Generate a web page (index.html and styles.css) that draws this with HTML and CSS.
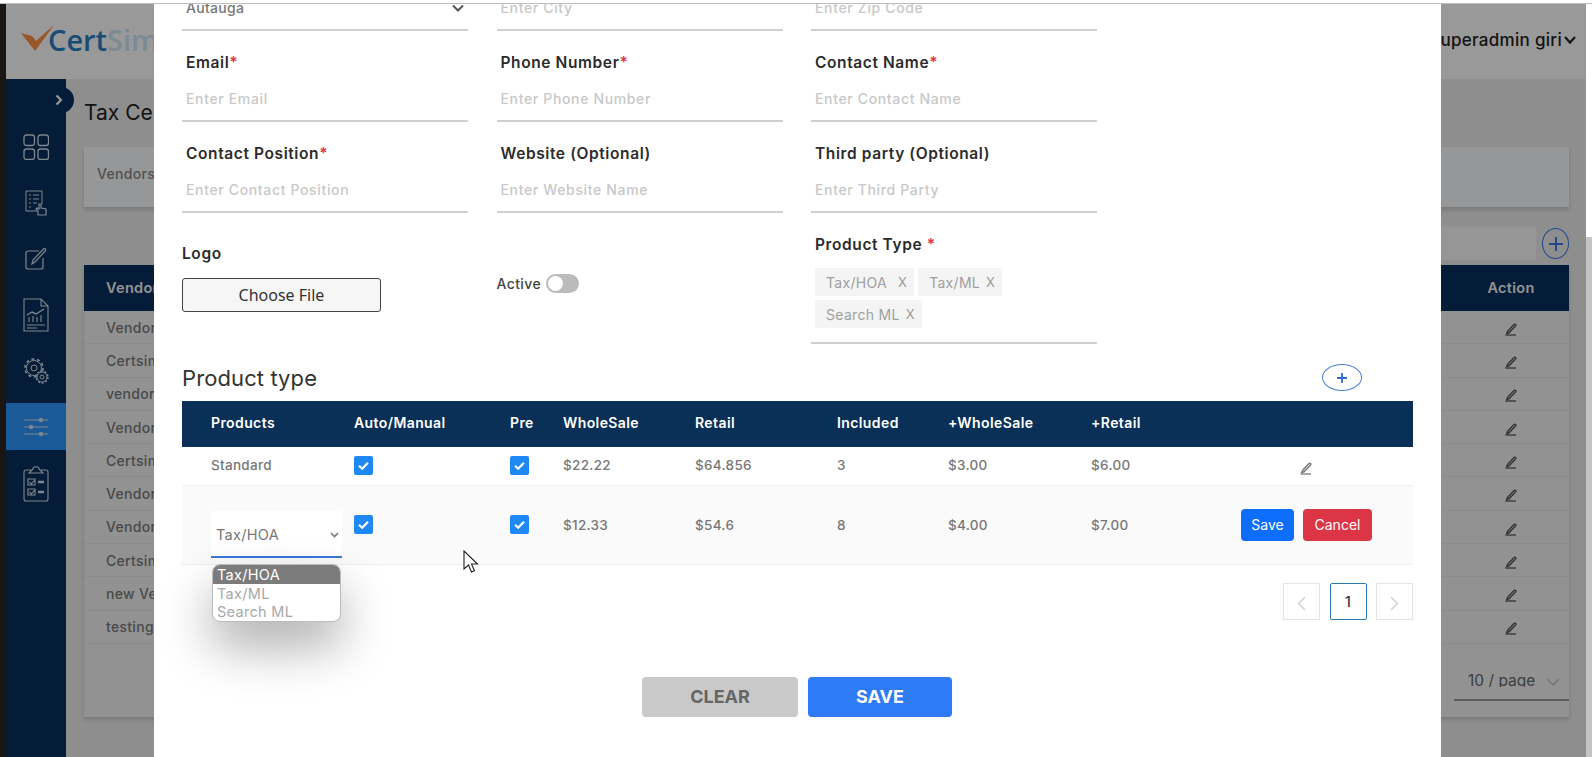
FILE: index.html
```html
<!DOCTYPE html>
<html lang="en">
<head>
  <meta charset="utf-8">
  <title>Tax Certificate Vendors</title>
  <link rel="stylesheet" href="styles.css">
</head>
<body>
  <svg class="defs" width="0" height="0">
    <symbol id="pen" viewBox="0 0 14 14">
      <path d="M3.5 9.6 10 2.6c.5-.5 1.200-.5 1.600-.1s.4 1.100-.1 1.600L5 10.800l-2.200.6z" fill="none" stroke="currentColor" stroke-width="1.400"/>
      <path d="M1.500 13h10.500" stroke="currentColor" stroke-width="1.300"/>
    </symbol>
    <symbol id="tick" viewBox="0 0 19 19">
      <path d="M5 9.800l3.200 3 5.800-6" fill="none" stroke="#fff" stroke-width="2.200"/>
    </symbol>
  </svg>

  <div class="topstrip"></div>
  <div class="window">
    <div class="app">
      <header class="header">
        <div class="logo">
          <svg class="logo-check" width="34" height="26" viewBox="0 0 34 26"><path d="M0 8l11 3 4 5L33 0 14 26z" fill="#ff8f45"/></svg>
          <span class="logo-cert">Cert</span><span class="logo-sim">Sim</span>
        </div>
        <div class="user">
          <span>superadmin giri</span>
          <svg width="12" height="10" viewBox="0 0 12 10"><path d="M1 2l5 5.500L11 2" fill="none" stroke="#222" stroke-width="2.200"/></svg>
        </div>
      </header>

      <div class="content">
        <nav class="sidebar">
          <span class="side-toggle">
            <svg width="8" height="12" viewBox="0 0 8 12"><path d="M1.500 1.500 6 6l-4.500 4.500" fill="none" stroke="#fff" stroke-width="2.200"/></svg>
          </span>
          <a class="side-item">
            <svg width="26" height="26" viewBox="0 0 26 26"><g fill="none" stroke="currentColor" stroke-width="1.300"><rect x="1" y="1" width="10.500" height="10.500" rx="2.500"/><rect x="15" y="1" width="10.500" height="10.500" rx="2.500"/><rect x="1" y="15" width="10.500" height="10.500" rx="2.500"/><rect x="15" y="15" width="10.500" height="10.500" rx="2.500"/></g></svg>
          </a>
          <a class="side-item">
            <svg width="22" height="26" viewBox="0 0 22 26"><g fill="none" stroke="currentColor" stroke-width="1"><path d="M12 21H1V1h16v13"/><path d="M4 5h2M8 5h6M4 9h2M8 9h6M4 13h2M8 13h4M4 17h2"/><path d="M13 25v-4l-2-2 1-1 2 1v-5h2v4l5 1v6z" stroke-width="1.200"/></g></svg>
          </a>
          <a class="side-item">
            <svg width="22" height="23" viewBox="0 0 22 23"><g fill="none" stroke="currentColor" stroke-width="1.200"><path d="M14 4H3a2 2 0 0 0-2 2v14a2 2 0 0 0 2 2h13a2 2 0 0 0 2-2V11"/><path d="M7 17l1-4L18.500 2c.8-.8 1.600-.6 2 0s.4 1.300-.3 2L10 15z"/></g></svg>
          </a>
          <a class="side-item">
            <svg width="26" height="34" viewBox="0 0 26 34"><g fill="none" stroke="currentColor" stroke-width="1.100"><path d="M1 1h17l7 7v25H1z"/><path d="M18 1v7h7"/><path d="M4 17l5-3 4 2 8-5" stroke-width="1.400"/><path d="M6 24v-5M10 24v-6M14 24v-5M18 24v-7M4 27h18M4 30h10"/></g></svg>
          </a>
          <a class="side-item">
            <svg width="26" height="28" viewBox="0 0 26 28"><g fill="none" stroke="currentColor"><circle cx="11" cy="11" r="7.500" stroke-width="1"/><circle cx="11" cy="11" r="9" stroke-width="1.600" stroke-dasharray="3 2.650"/><circle cx="11" cy="11" r="3" stroke-width="1"/><circle cx="19" cy="20" r="5" fill="#082f5d" stroke-width="1"/><circle cx="19" cy="20" r="6" stroke-width="1.300" stroke-dasharray="2 1.770"/><circle cx="19" cy="20" r="2" stroke-width="1"/></g></svg>
          </a>
          <a class="side-item active">
            <svg width="26" height="20" viewBox="0 0 26 20"><g stroke="currentColor" stroke-width="1"><path d="M1 3h24M1 10h24M1 17h24"/></g><g fill="currentColor"><circle cx="18" cy="3" r="2.200"/><circle cx="8" cy="10" r="2.200"/><circle cx="18" cy="17" r="2.200"/></g></svg>
          </a>
          <a class="side-item">
            <svg width="26" height="38" viewBox="0 0 26 38"><g fill="none" stroke="currentColor" stroke-width="1.100"><path d="M8 6H3a2 2 0 0 0-2 2v27a2 2 0 0 0 2 2h20a2 2 0 0 0 2-2V8a2 2 0 0 0-2-2h-5"/><path d="M6 9l4-4c0-3 6-3 6 0l4 4z"/><path d="M5 15h7v6H5zM5 25h7v6H5zM6.500 18l2 2 4-5M6.500 28l2 2 4-5"/><path d="M15 18h6M15 28h6" stroke-width="2.400"/></g></svg>
          </a>
        </nav>

        <main class="main">
          <h1 class="page-title">Tax Cert</h1>
          <div class="crumb-card">Vendors</div>
          <div class="toolbar">
            <div class="search"></div>
            <span class="round-add">
              <svg width="16" height="16" viewBox="0 0 16 16"><path d="M8 1v14M1 8h14" stroke="#3a78e8" stroke-width="2"/></svg>
            </span>
          </div>
          <section class="vendor-card">
            <div class="vendor-row vendor-head"><span>Vendor</span><span class="vendor-action">Action</span></div>
            <div class="vendor-row"><span>Vendor</span><span class="vendor-action"><svg class="pen"><use href="#pen"/></svg></span></div>
            <div class="vendor-row"><span>Certsim</span><span class="vendor-action"><svg class="pen"><use href="#pen"/></svg></span></div>
            <div class="vendor-row"><span>vendor</span><span class="vendor-action"><svg class="pen"><use href="#pen"/></svg></span></div>
            <div class="vendor-row"><span>Vendor</span><span class="vendor-action"><svg class="pen"><use href="#pen"/></svg></span></div>
            <div class="vendor-row"><span>Certsim</span><span class="vendor-action"><svg class="pen"><use href="#pen"/></svg></span></div>
            <div class="vendor-row"><span>Vendor</span><span class="vendor-action"><svg class="pen"><use href="#pen"/></svg></span></div>
            <div class="vendor-row"><span>Vendor</span><span class="vendor-action"><svg class="pen"><use href="#pen"/></svg></span></div>
            <div class="vendor-row"><span>Certsim</span><span class="vendor-action"><svg class="pen"><use href="#pen"/></svg></span></div>
            <div class="vendor-row"><span>new Vendor</span><span class="vendor-action"><svg class="pen"><use href="#pen"/></svg></span></div>
            <div class="vendor-row"><span>testing</span><span class="vendor-action"><svg class="pen"><use href="#pen"/></svg></span></div>
            <div class="vendor-foot">
              <div class="page-size">
                <span class="page-size-text">10 / page</span>
                <svg width="14" height="8" viewBox="0 0 14 8"><path d="M1 1l6 6 6-6" fill="none" stroke="#bbb" stroke-width="1.200"/></svg>
              </div>
            </div>
          </section>
        </main>
      </div>

      <div class="backdrop"></div>

      <div class="modal">
        <div class="modal-body">
          <div class="form-grid">
            <div class="input input-filled">Autauga
              <svg width="12" height="8" viewBox="0 0 12 8"><path d="M1 1.500l5 5 5-5" fill="none" stroke="#555" stroke-width="2"/></svg>
            </div>
            <div class="input">Enter City</div>
            <div class="input">Enter Zip Code</div>

            <div class="field"><label>Email<b>*</b></label><div class="input">Enter Email</div></div>
            <div class="field"><label>Phone Number<b>*</b></label><div class="input">Enter Phone Number</div></div>
            <div class="field"><label>Contact Name<b>*</b></label><div class="input">Enter Contact Name</div></div>

            <div class="field"><label>Contact Position<b>*</b></label><div class="input">Enter Contact Position</div></div>
            <div class="field"><label>Website (Optional)</label><div class="input">Enter Website Name</div></div>
            <div class="field"><label>Third party (Optional)</label><div class="input">Enter Third Party</div></div>

            <div class="logo-field">
              <label>Logo</label>
              <button class="file-btn">Choose File</button>
            </div>
            <div class="active-field">
              <span>Active</span>
              <span class="switch"><i></i></span>
            </div>
            <div class="type-field">
              <label>Product Type <b>*</b></label>
              <div class="tags">
                <span class="tag">Tax/HOA<em>X</em></span>
                <span class="tag">Tax/ML<em>X</em></span>
                <span class="tag">Search ML<em>X</em></span>
              </div>
            </div>
          </div>

          <div class="type-head">
            <h2>Product type</h2>
            <span class="oval-add">
              <svg width="12" height="12" viewBox="0 0 12 12"><path d="M6 1v10M1 6h10" stroke="#2f6fd8" stroke-width="1.800"/></svg>
            </span>
          </div>

          <table class="type-table">
            <colgroup>
              <col class="c-products"><col class="c-auto"><col class="c-pre"><col class="c-whole"><col class="c-retail"><col class="c-incl"><col class="c-pwhole"><col class="c-pretail"><col>
            </colgroup>
            <thead>
              <tr><th>Products</th><th>Auto/Manual</th><th>Pre</th><th>WholeSale</th><th>Retail</th><th>Included</th><th>+WholeSale</th><th>+Retail</th><th></th></tr>
            </thead>
            <tbody>
              <tr class="row-plain">
                <td>Standard</td>
                <td><span class="check"><svg><use href="#tick"/></svg></span></td>
                <td><span class="check"><svg><use href="#tick"/></svg></span></td>
                <td>$22.22</td><td>$64.856</td><td>3</td><td>$3.00</td><td>$6.00</td>
                <td><svg class="pen pen-row"><use href="#pen"/></svg></td>
              </tr>
              <tr class="row-edit">
                <td>
                  <div class="pick">
                    <span>Tax/HOA</span>
                    <svg width="9" height="6" viewBox="0 0 9 6"><path d="M1 1l3.500 3.500L8 1" fill="none" stroke="#777" stroke-width="1.600"/></svg>
                    <ul class="pick-list">
                      <li class="selected">Tax/HOA</li>
                      <li>Tax/ML</li>
                      <li>Search ML</li>
                    </ul>
                  </div>
                </td>
                <td><span class="check"><svg><use href="#tick"/></svg></span></td>
                <td><span class="check"><svg><use href="#tick"/></svg></span></td>
                <td>$12.33</td><td>$54.6</td><td>8</td><td>$4.00</td><td>$7.00</td>
                <td><div class="row-btns"><button class="btn-save">Save</button><button class="btn-cancel">Cancel</button></div></td>
              </tr>
            </tbody>
          </table>

          <div class="pager">
            <span class="pager-item"><svg width="9" height="14" viewBox="0 0 9 14"><path d="M8 1 1.500 7.500 8 14" fill="none" stroke="#ccc" stroke-width="1.200"/></svg></span>
            <span class="pager-item current">1</span>
            <span class="pager-item"><svg width="9" height="14" viewBox="0 0 9 14"><path d="M1 1l6.500 6.500L1 14" fill="none" stroke="#ccc" stroke-width="1.200"/></svg></span>
          </div>

          <div class="modal-foot">
            <button class="btn-clear">CLEAR</button>
            <button class="btn-submit">SAVE</button>
          </div>
        </div>

        <svg class="cursor" width="16" height="24" viewBox="0 0 16 24"><path d="M1 1v18l4.500-4 3 7 3-1.300-3-6.700h6z" fill="#fff" stroke="#222" stroke-width="1.100"/></svg>
      </div>
    </div>
    <div class="scrollbar"><div class="scroll-thumb"></div></div>
  </div>
</body>
</html>
```

FILE: styles.css
```css
* {
  margin: 0;
  padding: 0;
  box-sizing: border-box;
  list-style: none;
}

html, body {
  height: 100%;
  overflow: hidden;
}

body {
  background: #fff;
  font-family: Inter, "Liberation Sans", sans-serif;
  color: #333;
}

.defs {
  display: block;
  height: 0;
}

.topstrip {
  height: 4px;
  border-bottom: 1px solid #bdbdbd;
}

.window {
  display: flex;
  height: 753px;
  background: #1a1614;
  padding-left: 6px;
}

.app {
  position: relative;
  flex: 1;
  display: flex;
  flex-direction: column;
  overflow: hidden;
  background: #ededed;
}

.scrollbar {
  width: 6px;
  background: #fff;
  padding-top: 233px;
}

.scroll-thumb {
  height: 100%;
  background: #c4c4c4;
}

/* page behind the dialog */
.header {
  height: 75px;
  flex: none;
  display: flex;
  justify-content: space-between;
  align-items: center;
  background: #fff;
  padding: 0 10px 4px 15px;
}

.logo {
  display: flex;
  align-items: center;
  font-family: "Open Sans", sans-serif;
  font-size: 29px;
  font-weight: 600;
}

.logo-check {
  margin: -4px -7px 0 0;
}

.logo-cert {
  color: #2a7fc4;
}

.logo-sim {
  color: #cfe6f5;
}

.user {
  display: flex;
  align-items: center;
  gap: 2px;
  font-size: 17px;
  font-weight: 500;
  color: #222;
  letter-spacing: .3px;
}

.content {
  flex: 1;
  display: flex;
  min-height: 0;
}

.sidebar {
  position: relative;
  width: 60px;
  flex: none;
  display: flex;
  flex-direction: column;
  gap: 9px;
  padding-top: 44px;
  background: #082f5d;
}

.side-toggle {
  position: absolute;
  top: 8px;
  right: -8px;
  width: 26px;
  height: 26px;
  border-radius: 50%;
  background: #082f5d;
  display: flex;
  align-items: center;
  padding-left: 7px;
}

.side-item {
  height: 47px;
  display: flex;
  align-items: center;
  justify-content: center;
  color: #d4e0ec;
}

.side-item.active {
  background: #2d96ff;
}

.main {
  flex: 1;
  min-width: 0;
  padding: 19px 17px 0 18px;
}

.page-title {
  font-size: 21px;
  font-weight: 400;
  line-height: 30px;
  color: #222;
  white-space: nowrap;
}

.crumb-card {
  height: 60px;
  margin-top: 19px;
  padding: 18px 13px;
  font-size: 14px;
  font-weight: 500;
  color: #888;
  letter-spacing: .3px;
  background: #fafcff;
  box-shadow: 0 3px 4px rgba(0, 0, 0, .15);
}

.toolbar {
  display: flex;
  justify-content: flex-end;
  align-items: center;
  gap: 5px;
  height: 35px;
  margin-top: 19px;
}

.search {
  width: 300px;
  height: 35px;
  background: #fafafa;
  border: 1px solid #f0f0f0;
}

.round-add {
  width: 27px;
  height: 31px;
  display: flex;
  align-items: center;
  justify-content: center;
  border: 1px solid #3a78e8;
  border-radius: 50%;
}

.vendor-card {
  margin-top: 4px;
  height: 452px;
  background: #f4f4f4;
  box-shadow: 0 3px 4px rgba(0, 0, 0, .15);
}

.vendor-row {
  display: flex;
  justify-content: space-between;
  align-items: center;
  height: 33.300px;
  padding-left: 22px;
  border-bottom: 1px solid #e8e8e8;
  font-size: 14px;
  font-weight: 500;
  color: #7a7a7a;
  letter-spacing: .3px;
}

.vendor-head {
  height: 46px;
  padding-bottom: 2px;
  background: #082f5d;
  color: #f4f4f4;
  font-size: 14.500px;
  font-weight: 600;
  border: 0;
}

.vendor-action {
  width: 116px;
  text-align: center;
}

.pen {
  display: inline-block;
  width: 14px;
  height: 14px;
  color: #555;
  vertical-align: middle;
}

.vendor-foot {
  display: flex;
  justify-content: flex-end;
  padding-top: 18px;
}

.page-size {
  width: 115px;
  height: 39px;
  display: flex;
  align-items: flex-start;
  gap: 11px;
  padding: 10px 0 0 14px;
  border-bottom: 2px solid #999;
}

.page-size-text {
  height: 15px;
  overflow: hidden;
  font-size: 15.500px;
  line-height: 18px;
  color: #666;
}

.page-size svg {
  margin-top: 6px;
}

.backdrop {
  position: absolute;
  inset: 0;
  background: rgba(0, 0, 0, .4);
}

/* dialog */
.modal {
  position: absolute;
  top: 0;
  bottom: 0;
  left: 148px;
  width: 1287px;
  background: #fff;
  overflow: hidden;
}

.modal-body {
  margin-top: -22px;
  padding: 0 28px;
}

.form-grid {
  display: grid;
  grid-template-columns: 286px 286px 286px;
  column-gap: 28.500px;
}

.field {
  height: 91px;
  padding-top: 22px;
}

label {
  display: block;
  height: 20px;
  padding-left: 4px;
  font-size: 15.500px;
  line-height: 20px;
  font-weight: 600;
  color: #2b2b2b;
  letter-spacing: .6px;
}

label b {
  color: #e0354b;
  font-weight: 600;
}

.input {
  height: 49px;
  padding: 16px 4px 0;
  border-bottom: 2px solid #cfcfcf;
  font-size: 14px;
  line-height: 20px;
  font-weight: 500;
  color: #c8c8c8;
  letter-spacing: .65px;
}

.input-filled {
  display: flex;
  justify-content: space-between;
  align-items: flex-start;
  color: #777;
  letter-spacing: .3px;
}

.input-filled svg {
  margin: 6px 0 0;
}

.logo-field {
  padding-top: 31px;
}

.logo-field label {
  padding-left: 0;
}

.file-btn {
  display: block;
  width: 199px;
  height: 34px;
  margin-top: 14px;
  border: 1px solid #444;
  border-radius: 3px;
  background: #f6f6f7;
  font-family: "Noto Sans", sans-serif;
  font-size: 16px;
  color: #333;
}

.active-field {
  display: flex;
  align-items: center;
  gap: 5px;
  height: 20px;
  margin-top: 60px;
  font-size: 14px;
  font-weight: 500;
  letter-spacing: .4px;
  color: #444;
}

.switch {
  width: 33px;
  height: 19px;
  padding: 2px;
  border-radius: 10px;
  background: #bbb;
}

.switch i {
  display: block;
  width: 15px;
  height: 15px;
  border-radius: 50%;
  background: #fff;
}

.type-field {
  height: 131px;
  padding-top: 22px;
  border-bottom: 2px solid #cfcfcf;
}

.tags {
  display: flex;
  flex-wrap: wrap;
  align-content: flex-start;
  gap: 4px;
  width: 205px;
  margin: 13px 0 0 4px;
}

.tag {
  display: flex;
  align-items: center;
  height: 28px;
  padding: 0 7px 0 11px;
  background: #f4f4f4;
  font-size: 14px;
  letter-spacing: .3px;
  color: #a0a0a0;
  white-space: nowrap;
}

.tag em {
  margin-left: 6px;
  font-style: normal;
  font-size: 13px;
  color: #999;
}

.tag:first-child em {
  margin-left: 11px;
}

.type-head {
  display: flex;
  justify-content: space-between;
  align-items: center;
  height: 57px;
  padding: 11px 51px 0 0;
}

.type-head h2 {
  font-size: 22px;
  font-weight: 400;
  letter-spacing: .1px;
  color: #333;
}

.oval-add {
  width: 40px;
  height: 27px;
  margin-top: -1px;
  display: flex;
  align-items: center;
  justify-content: center;
  border: 1px solid #4a80d8;
  border-radius: 50%;
}

.type-table {
  width: 1231px;
  table-layout: fixed;
  border-collapse: collapse;
}

.c-products { width: 172px; }
.c-auto { width: 156px; }
.c-pre { width: 53px; }
.c-whole { width: 132px; }
.c-retail { width: 142px; }
.c-incl { width: 111px; }
.c-pwhole { width: 143px; }
.c-pretail { width: 150px; }

.type-table th {
  height: 46px;
  padding-bottom: 3px;
  background: #0a3057;
  color: #fff;
  font-size: 14px;
  font-weight: 600;
  text-align: left;
  letter-spacing: .4px;
}

.type-table td {
  height: 38px;
  border-bottom: 1px solid #f0f0f0;
  font-size: 13.500px;
  font-weight: 500;
  color: #777;
  letter-spacing: .3px;
}

.type-table th:first-child,
.type-table td:first-child {
  padding-left: 29px;
}

.row-plain td {
  padding-bottom: 1px;
}

.row-edit td {
  height: 79px;
  background: #fafafa;
}

.check {
  display: block;
  width: 19px;
  height: 19px;
  border-radius: 2px;
  background: #1e88f5;
}

.check svg {
  display: block;
  width: 19px;
  height: 19px;
}

.pen-row {
  margin: 5px 0 0 58px;
  color: #777;
}

.pick {
  position: relative;
  display: flex;
  justify-content: space-between;
  align-items: center;
  width: 131px;
  height: 47px;
  margin-top: 20px;
  padding: 2px 3px 0 5px;
  background: #fff;
  border-bottom: 2px solid #3a78d8;
  font-size: 14.500px;
  color: #777;
  font-weight: 400;
}

.pick-list {
  position: absolute;
  top: 53px;
  left: 1px;
  width: 129px;
  overflow: hidden;
  border: 1px solid #bbb;
  border-radius: 8px;
  background: #fff;
  box-shadow: 0 25px 50px rgba(0, 0, 0, .32);
  z-index: 2;
}

.pick-list li {
  height: 18.500px;
  padding-left: 4px;
  font-size: 14.500px;
  line-height: 19px;
  color: #a8a8a8;
}

.pick-list li.selected {
  background: #7b7b7b;
  color: #fff;
}

.row-btns {
  display: flex;
  gap: 9px;
}

.row-btns button {
  height: 32px;
  border: 0;
  border-radius: 4px;
  color: #fff;
  font-family: inherit;
  font-size: 14px;
}

.btn-save {
  width: 53px;
  background: #0d6efd;
}

.btn-cancel {
  width: 69px;
  background: #dc3545;
}

.pager {
  display: flex;
  justify-content: flex-end;
  gap: 9.500px;
  margin-top: 18px;
}

.pager-item {
  width: 37px;
  height: 37px;
  display: flex;
  align-items: center;
  justify-content: center;
  border: 1px solid #e4e4e4;
  font-size: 14px;
  font-weight: 500;
  color: #333;
}

.pager-item svg {
  margin-top: 4px;
}

.pager-item.current {
  border-color: #2b7bb0;
  border-radius: 2px;
}

.modal-foot {
  display: flex;
  justify-content: center;
  gap: 10px;
  margin-top: 57px;
  padding-right: 1px;
}

.modal-foot button {
  height: 40px;
  border: 0;
  border-radius: 4px;
  font-family: inherit;
  font-size: 18px;
  font-weight: 700;
}

.btn-clear {
  width: 156px;
  background: #c9c9c9;
  color: #666;
}

.btn-submit {
  width: 144px;
  background: #2f7af5;
  color: #fff;
}

.cursor {
  position: absolute;
  left: 309px;
  top: 546px;
  z-index: 3;
}
```
